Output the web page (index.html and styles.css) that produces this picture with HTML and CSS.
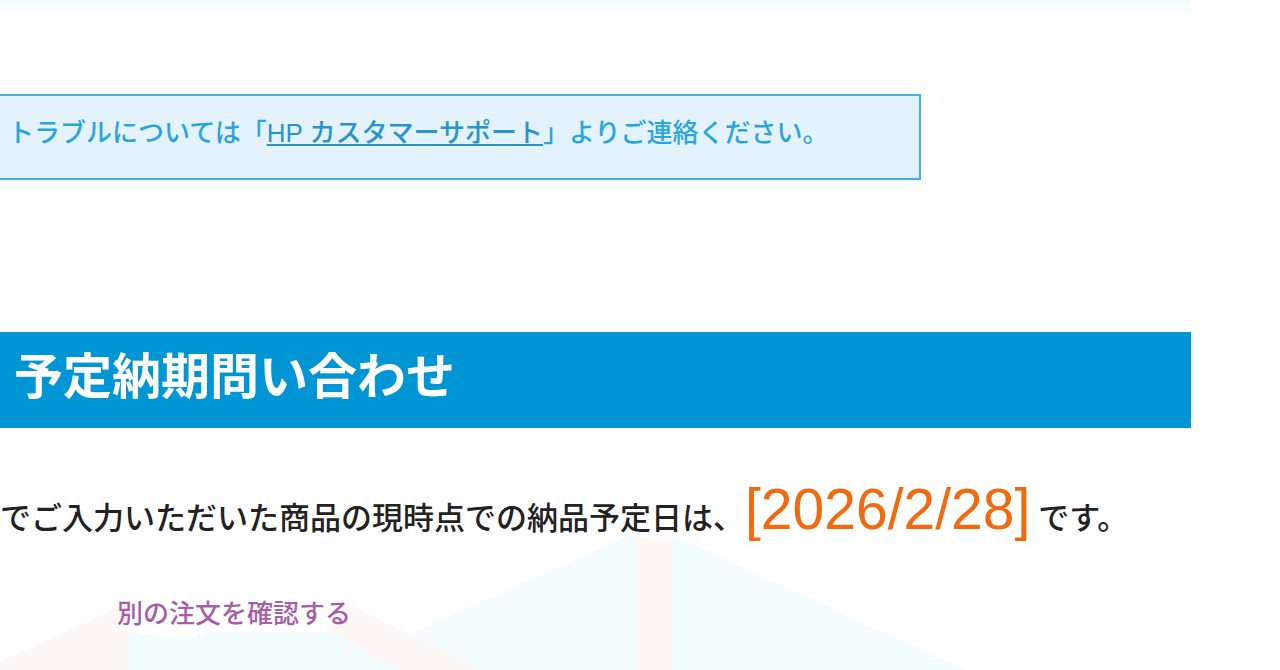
FILE: index.html
```
<!DOCTYPE html>
<html lang="ja">

<head>
    <meta charset="utf-8">
    <title>予定納期問い合わせ</title>
    <link rel="stylesheet" href="styles.css">
</head>

<body>
    <div class="page">
        <div class="top-fade"></div>

        <p class="notice">トラブルについては「<a href="#support">HP カスタマーサポート</a>」よりご連絡ください。</p>

        <h1 class="title">予定納期問い合わせ</h1>

        <div class="result">
            <svg class="pattern" viewBox="0 0 1191 242" preserveAspectRatio="xMinYMin slice" aria-hidden="true">
                <path class="pattern-blue" d="M127 204L190 212L204 204H332L400 242H127zM635 104V242H480L408 206L620 112zM672 107L966 242H672z" />
                <path class="pattern-orange" d="M0 234L116 180L127 176V242H0zM635 107L658 113L672 107V242H635zM340 172L408 206L480 242H400L326 202z" />
            </svg>
            <p class="message">でご入力いただいた商品の現時点での納品予定日は、<span class="date">[2026/2/28]</span>です。</p>
            <a class="back-link" href="#order">別の注文を確認する</a>
        </div>
    </div>
</body>

</html>
```
FILE: styles.css
```
body {
    margin: 0;
    background: #fff;
    color: #222;
    font-family: "Liberation Sans", "Noto Sans CJK JP", sans-serif;
    overflow: hidden;
}

.page {
    margin-right: 89px;
    white-space: nowrap;
}

.top-fade {
    height: 16px;
    background: linear-gradient(#f0fbfe, #f5fdfe 50%, #fff);
}

.notice {
    margin: 78px 270px 0 0;
    padding: 18px 8px 26px;
    background: #e4f3fb;
    border: 2px solid #40b1e2;
    border-left: 0;
    color: #2aa6de;
    font-size: 26px;
    font-weight: 500;
    line-height: 38px;
}

.notice a {
    color: #2a94cb;
}

.title {
    margin: 152px 0 0;
    padding: 10px 14px 16px;
    background: #0096d6;
    color: #fff;
    font-size: 49px;
    font-weight: 700;
    line-height: 70px;
}

.result {
    position: relative;
    padding-top: 41px;
    min-height: 201px;
}

.pattern {
    position: absolute;
    left: 0;
    top: 0;
    width: 100%;
    height: 100%;
    z-index: -1;
}

.pattern-blue {
    fill: #f3fcfe;
}

.pattern-orange {
    fill: #fef8f5;
}

.message {
    margin: 0;
    font-size: 31px;
    font-weight: 500;
    line-height: 80px;
}

.date {
    margin: 0 8px 0 1px;
    color: #f26a10;
    font-size: 57px;
    font-weight: 400;
}

.back-link {
    display: inline-block;
    margin: 35px 0 0 117px;
    color: #a55fa5;
    font-size: 26px;
    font-weight: 500;
    line-height: 40px;
    text-decoration: none;
}
```
